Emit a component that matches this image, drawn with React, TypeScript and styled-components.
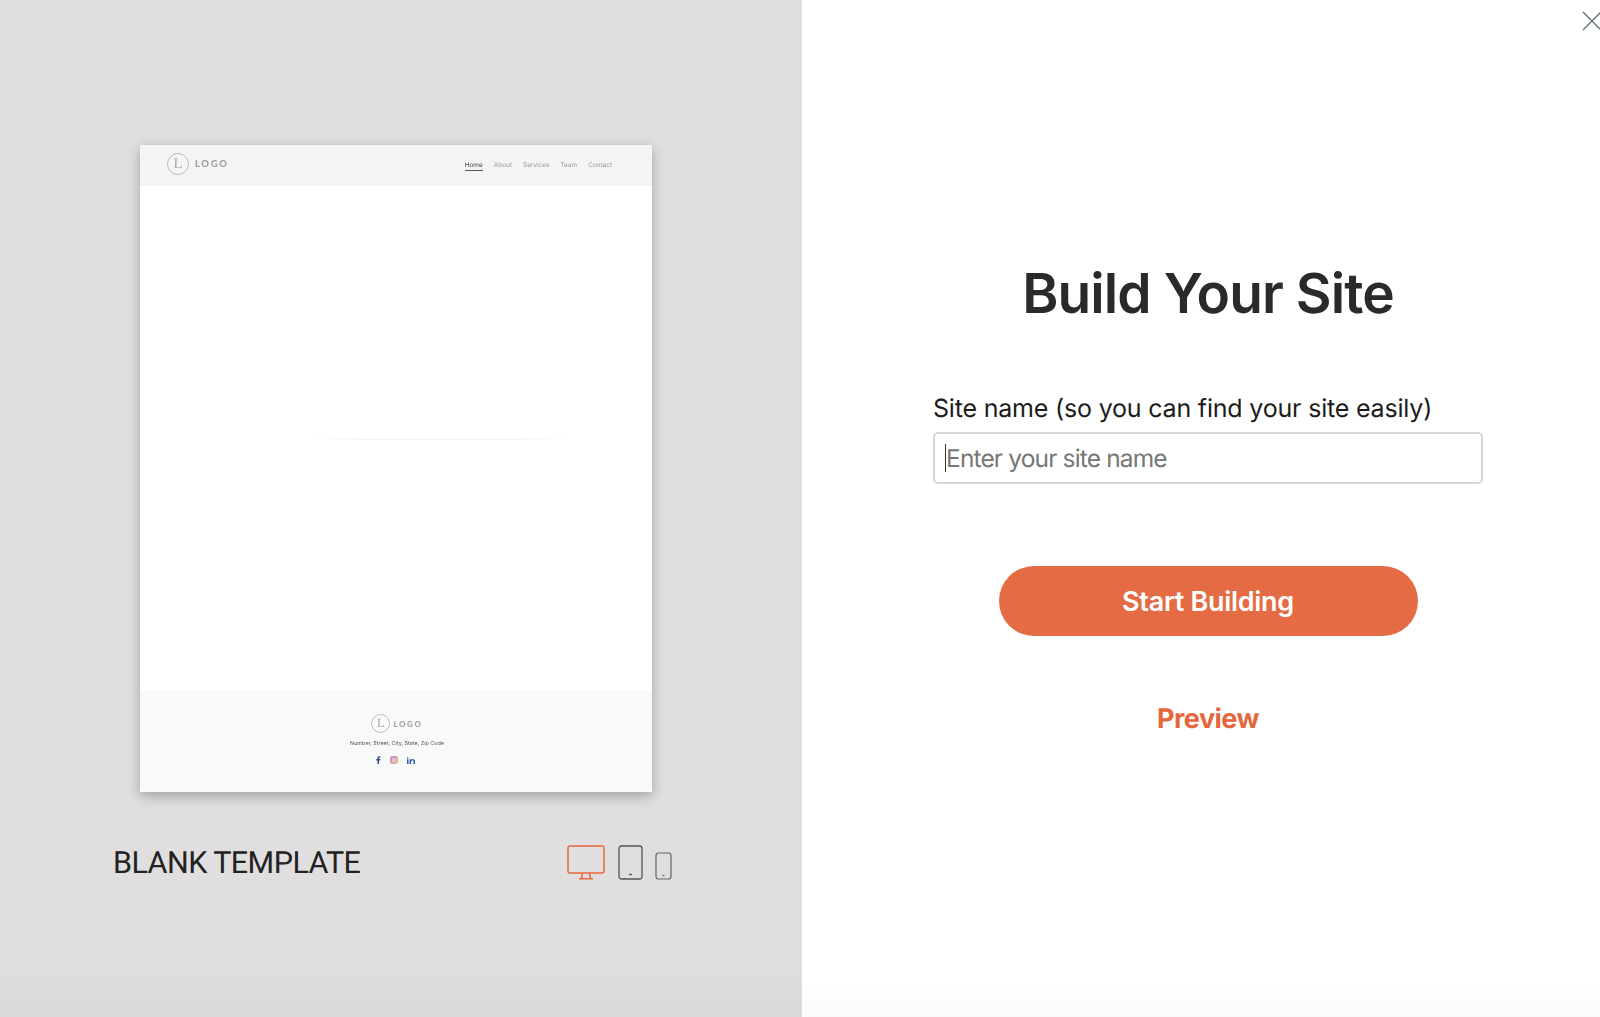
import React from "react";
import styled, { createGlobalStyle } from "styled-components";

const GlobalStyle = createGlobalStyle`
  html, body {
    margin: 0;
    padding: 0;
    height: 100%;
    background: #fff;
  }
  #root {
    height: 100%;
  }
`;

const Page = styled.main`
  display: flex;
  width: 1600px;
  height: 1017px;
  overflow: hidden;
  font-family: Inter, "Liberation Sans", sans-serif;
  text-rendering: geometricPrecision;
`;

const PreviewPane = styled.section`
  width: 802px;
  height: 100%;
  box-sizing: border-box;
  padding: 145px 0 0 140px;
  background: linear-gradient(#e0dedf 0, #e0dedf 960px, #dad8d9 1017px);
`;

const TemplateCard = styled.div`
  display: flex;
  flex-direction: column;
  width: 512px;
  height: 647px;
  background: #fff;
  box-shadow: 0 4px 12px rgba(0, 0, 0, 0.28);
`;

const CardHeader = styled.header`
  display: flex;
  align-items: center;
  justify-content: space-between;
  height: 41px;
  padding: 0 40px 0 27px;
  background: #f4f4f4;
  filter: blur(0.35px);
`;

const LogoRow = styled.div<{ $gap: number; $lift?: number }>`
  display: flex;
  align-items: center;
  gap: ${(p) => p.$gap}px;
  margin-bottom: ${(p) => p.$lift ?? 0}px;
`;

const LogoMark = styled.span<{ $size: number }>`
  display: flex;
  align-items: center;
  justify-content: center;
  box-sizing: border-box;
  width: ${(p) => p.$size}px;
  height: ${(p) => p.$size}px;
  border: 1px solid #bdbdbd;
  border-radius: 50%;
  color: #a8a8a8;
  font-family: "Liberation Serif", serif;
  font-size: ${(p) => p.$size * 0.66}px;
  line-height: 1;
`;

const LogoWord = styled.span<{ $size: number }>`
  color: #a0a0a0;
  font-family: Lato, sans-serif;
  font-size: ${(p) => p.$size}px;
  font-weight: 900;
  letter-spacing: 1.6px;
`;

const NavList = styled.nav`
  display: flex;
  gap: 11.2px;
  margin-top: 2px;
`;

const NavItem = styled.span<{ $active?: boolean }>`
  padding-bottom: 1px;
  border-bottom: 1px solid ${(p) => (p.$active ? "#555" : "transparent")};
  color: ${(p) => (p.$active ? "#444" : "#9a9a9a")};
  font-size: 6.4px;
  line-height: 7px;
`;

const CardBody = styled.div`
  flex: 1;
  display: flex;
  align-items: flex-start;
  justify-content: center;
  padding: 252px 0 0 88px;
`;

const FaintLine = styled.div`
  width: 260px;
  height: 2px;
  background: linear-gradient(90deg, #fff, #f6f6f6 20%, #f6f6f6 80%, #fff);
`;

const CardFooter = styled.footer`
  display: flex;
  flex-direction: column;
  align-items: center;
  height: 102px;
  box-sizing: border-box;
  padding: 24px 0 0 2px;
  background: #f9f9f9;
  filter: blur(0.3px);
`;

const FooterAddress = styled.div`
  margin-top: 7px;
  color: #555;
  font-size: 5.4px;
  line-height: 8px;
`;

const SocialRow = styled.div`
  display: flex;
  align-items: center;
  gap: 9px;
  margin: 8px 3px 0 0;
  height: 8px;
`;

const CaptionRow = styled.div`
  display: flex;
  align-items: flex-end;
  justify-content: space-between;
  width: 559px;
  margin: 53px 0 0 -27px;
`;

const TemplateName = styled.h2`
  margin: 0 0 3px;
  color: #222;
  font-family: Roboto, sans-serif;
  font-size: 30.5px;
  font-weight: 400;
  line-height: 36px;
  letter-spacing: -0.55px;
`;

const DeviceRow = styled.div`
  display: flex;
  align-items: flex-end;
  margin-bottom: 5px;

  svg + svg {
    margin-left: 13px;
  }
  svg:last-child {
    margin-left: 12px;
  }
`;

const FormPane = styled.section`
  position: relative;
  flex: 1;
  box-sizing: border-box;
  padding: 258px 0 0 131px;
  background: linear-gradient(#fff 0, #fff 985px, #fafafa 1017px);
`;

const CloseButton = styled.button`
  position: absolute;
  top: 10px;
  right: -3px;
  width: 22px;
  height: 22px;
  padding: 0;
  border: 0;
  background: none;
`;

const FormColumn = styled.form`
  display: flex;
  flex-direction: column;
  align-items: center;
  width: 550px;
`;

const Title = styled.h1`
  margin: 0;
  color: #2a2a2a;
  font-size: 55px;
  font-weight: 600;
  line-height: 72px;
  letter-spacing: -0.9px;
`;

const FieldLabel = styled.label`
  align-self: stretch;
  margin-top: 61px;
  color: #1c1c1c;
  font-size: 25px;
  line-height: 36px;
  letter-spacing: -0.19px;
`;

const SiteInput = styled.div`
  display: flex;
  align-items: center;
  align-self: stretch;
  box-sizing: border-box;
  height: 52px;
  margin-top: 5px;
  padding-left: 10px;
  border: 2px solid #d3d7da;
  border-radius: 5px;
  background: #fff;
`;

const Caret = styled.span`
  width: 1px;
  height: 28px;
  background: #333;
`;

const Placeholder = styled.span`
  color: #767676;
  font-size: 24.5px;
  letter-spacing: -0.85px;
`;

const StartButton = styled.button`
  width: 419px;
  height: 70px;
  margin-top: 82px;
  border: 0;
  border-radius: 35px;
  background: #e46b43;
  color: #fff;
  font-family: inherit;
  font-size: 27px;
  font-weight: 600;
  letter-spacing: -0.3px;
`;

const PreviewLink = styled.a`
  margin-top: 65px;
  color: #e4673d;
  font-size: 27px;
  font-weight: 700;
  line-height: 36px;
  letter-spacing: -0.55px;
`;

const NAV_ITEMS = ["Home", "About", "Services", "Team", "Contact"];

const App = () => (
  <>
    <GlobalStyle />
    <Page>
      <PreviewPane>
        <TemplateCard>
          <CardHeader>
            <LogoRow $gap={6} $lift={3}>
              <LogoMark $size={22}>L</LogoMark>
              <LogoWord $size={9.5}>LOGO</LogoWord>
            </LogoRow>
            <NavList>
              {NAV_ITEMS.map((item) => (
                <NavItem key={item} $active={item === "Home"}>
                  {item}
                </NavItem>
              ))}
            </NavList>
          </CardHeader>
          <CardBody>
            <FaintLine />
          </CardBody>
          <CardFooter>
            <LogoRow $gap={3}>
              <LogoMark $size={19}>L</LogoMark>
              <LogoWord $size={8}>LOGO</LogoWord>
            </LogoRow>
            <FooterAddress>Number, Street, City, State, Zip Code</FooterAddress>
            <SocialRow>
              <svg width="5" height="8" viewBox="0 0 5 8">
                <path d="M1.5 8V4.4H.3V3h1.2V2C1.5.8 2.2.2 3.3.2h1.1v1.3h-.7c-.5 0-.7.2-.7.7V3h1.4l-.2 1.4H3V8z" fill="#2b4a8b" />
              </svg>
              <svg width="8" height="8" viewBox="0 0 8 8">
                <defs>
                  <linearGradient id="insta" x1="0" y1="0" x2="1" y2="1">
                    <stop offset="0" stopColor="#b98be0" />
                    <stop offset="1" stopColor="#f6bd74" />
                  </linearGradient>
                </defs>
                <rect x="0" y="0" width="8" height="8" rx="2.2" fill="url(#insta)" />
                <circle cx="4" cy="4" r="1.6" fill="none" stroke="#f4dfe8" strokeWidth="0.8" />
              </svg>
              <svg width="8" height="7" viewBox="0 0 8 7">
                <path d="M0 2.2h1.5V7H0zM.75 0a.8.8 0 1 1 0 1.6.8.8 0 0 1 0-1.6zM2.6 2.2H4v.7c.3-.5.8-.8 1.6-.8C7.200 2.100 8 3 8 4.400V7H6.500V4.700c0-.8-.3-1.300-1-1.300S4.100 3.900 4.100 4.700V7H2.600z" fill="#2f5ea8" />
              </svg>
            </SocialRow>
          </CardFooter>
        </TemplateCard>
        <CaptionRow>
          <TemplateName>BLANK TEMPLATE</TemplateName>
          <DeviceRow>
            <svg width="38" height="35" viewBox="0 0 38 35" fill="none" stroke="#e8683c" strokeWidth="1.5">
              <rect x="1" y="1" width="36" height="27" rx="2" />
              <path d="M15.500 28l-1 5.500M22.500 28l1 5.500M12 33.800h14" />
            </svg>
            <svg width="25" height="35" viewBox="0 0 25 35" fill="none" stroke="#555" strokeWidth="1.300">
              <rect x="1" y="1" width="23" height="33" rx="2.500" />
              <path d="M11 29.500h3" />
            </svg>
            <svg width="17" height="28" viewBox="0 0 17 28" fill="none" stroke="#666" strokeWidth="1.200">
              <rect x="1" y="1" width="15" height="26" rx="2.500" />
              <path d="M7.500 23.500h2" />
            </svg>
          </DeviceRow>
        </CaptionRow>
      </PreviewPane>
      <FormPane>
        <CloseButton type="button" aria-label="Close">
          <svg width="22" height="22" viewBox="0 0 22 22" fill="none" stroke="#62717a" strokeWidth="1.400">
            <path d="M2 2l18 18M20 2L2 20" />
          </svg>
        </CloseButton>
        <FormColumn>
          <Title>Build Your Site</Title>
          <FieldLabel>Site name (so you can find your site easily)</FieldLabel>
          <SiteInput>
            <Caret />
            <Placeholder>Enter your site name</Placeholder>
          </SiteInput>
          <StartButton type="button">Start Building</StartButton>
          <PreviewLink>Preview</PreviewLink>
        </FormColumn>
      </FormPane>
    </Page>
  </>
);

export default App;
